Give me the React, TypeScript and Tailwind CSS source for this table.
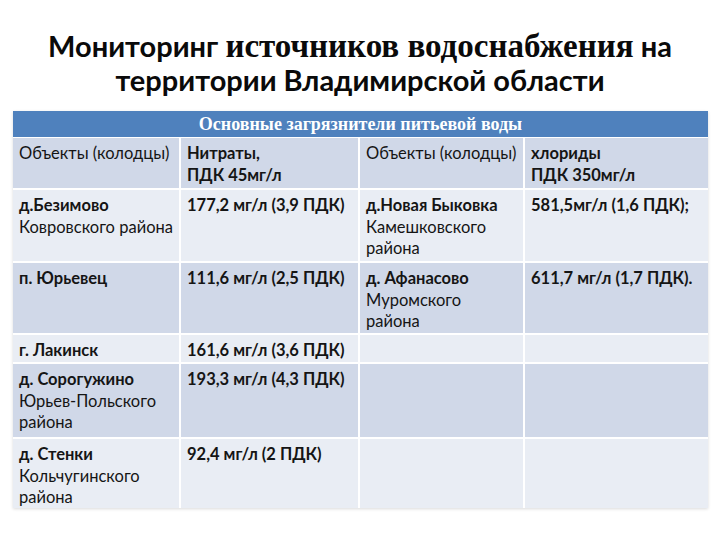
const sans = { fontFamily: "Lato, 'Open Sans', sans-serif" };

type Cell = { bold?: string; rest?: string[] };

const rows: { h: string; dark: boolean; cells: Cell[] }[] = [
  {
    h: "h-[50px]",
    dark: true,
    cells: [
      { rest: ["Объекты (колодцы)"] },
      { bold: "Нитраты,\nПДК 45мг/л" },
      { rest: ["Объекты (колодцы)"] },
      { bold: "хлориды\nПДК 350мг/л" },
    ],
  },
  {
    h: "h-[71px]",
    dark: false,
    cells: [
      { bold: "д.Безимово", rest: ["Ковровского района"] },
      { bold: "177,2 мг/л (3,9 ПДК)" },
      { bold: "д.Новая Быковка", rest: ["Камешковского", "района"] },
      { bold: "581,5мг/л (1,6 ПДК);" },
    ],
  },
  {
    h: "h-[70px]",
    dark: true,
    cells: [
      { bold: "п. Юрьевец" },
      { bold: "111,6 мг/л (2,5 ПДК)" },
      { bold: "д. Афанасово", rest: ["Муромского", "района"] },
      { bold: "611,7 мг/л (1,7 ПДК)." },
    ],
  },
  {
    h: "h-[27px]",
    dark: false,
    cells: [{ bold: "г. Лакинск" }, { bold: "161,6 мг/л (3,6 ПДК)" }, {}, {}],
  },
  {
    h: "h-[73px]",
    dark: true,
    cells: [
      { bold: "д. Сорогужино", rest: ["Юрьев-Польского", "района"] },
      { bold: "193,3 мг/л (4,3 ПДК)" },
      {},
      {},
    ],
  },
  {
    h: "h-[69px]",
    dark: false,
    cells: [
      { bold: "д. Стенки", rest: ["Кольчугинского", "района"] },
      { bold: "92,4 мг/л (2 ПДК)" },
      {},
      {},
    ],
  },
];

export default function App() {
  return (
    <div className="w-[720px] h-[540px] bg-white overflow-hidden" style={sans}>
      <div className="pt-[29px] text-center text-[29px] leading-[34px] font-bold text-[#0a0a0a]">
        <div className="whitespace-nowrap">
          Мониторинг{" "}
          <span className="text-[33px]" style={{ fontFamily: "'Liberation Serif', serif" }}>
            источников водоснабжения
          </span>{" "}
          на
        </div>
        <div>территории Владимирской области</div>
      </div>

      <div className="mx-[13px] mt-[14px] w-[695px] bg-white shadow-[0_1px_3px_rgba(0,0,0,0.15)]">
        <div
          className="h-[26px] bg-[#4f81bd] flex items-end justify-center pb-[2px] text-white font-bold text-[18px] leading-[22px]"
          style={{ fontFamily: "'Liberation Serif', serif" }}
        >
          Основные загрязнители питьевой воды
        </div>
        <div className="grid grid-cols-[166px_177px_163px_183px] gap-[2px] pt-[1px]">
          {rows.map((r, i) =>
            r.cells.map((c, j) => (
              <div
                key={i + "-" + j}
                className={`${r.h} ${r.dark ? "bg-[#d0d8e8]" : "bg-[#e9edf4]"} pl-[6px] pr-[1px] pt-[5px] text-[16.5px] leading-[21.5px] text-[#151515] whitespace-nowrap`}
              >
                {c.bold && <div className="font-bold whitespace-pre-line">{c.bold}</div>}
                {c.rest?.map((t) => (
                  <div key={t}>{t}</div>
                ))}
              </div>
            ))
          )}
        </div>
      </div>
    </div>
  );
}
